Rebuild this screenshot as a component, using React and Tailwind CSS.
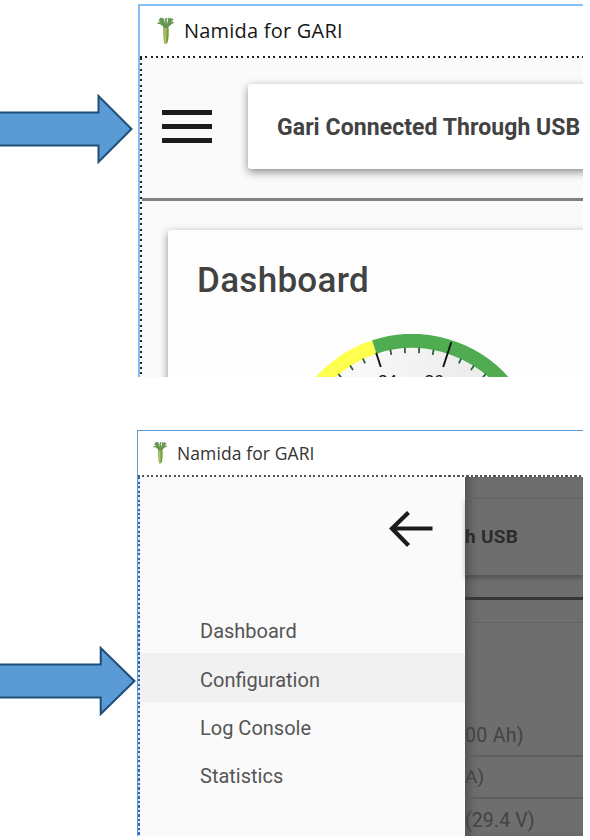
import React from 'react';

const point = (r, deg) => {
  const a = (deg * Math.PI) / 180;
  return [129 + r * Math.sin(a), 129 - r * Math.cos(a)];
};

const arc = (from, to) => {
  const [x1, y1] = point(122, from);
  const [x2, y2] = point(122, to);
  return `M${x1} ${y1}A122 122 0 0 1 ${x2} ${y2}`;
};

function BlockArrow() {
  return (
    <svg className="block h-[70px] w-full" viewBox="0 0 133 70" preserveAspectRatio="none">
      <path
        d="M-4 18.5H98.5V2L131.5 35L98.5 68V51.5H-4Z"
        fill="#5b9bd5"
        stroke="#1f4e79"
        strokeWidth="2"
      />
    </svg>
  );
}

function Daikon({ className }) {
  return (
    <svg className={className} viewBox="0 0 17 28">
      <path d="M6.2 9.5Q8.700 8.500 11.600 9.500Q12 19 10.900 25Q9.400 28 7.400 26.500Q6 22 6.200 9.500Z" fill="#8cae4c" />
      <path d="M8 11Q7.500 20 8.600 26" stroke="#b5c979" strokeWidth="1.200" fill="none" />
      <path d="M10.800 11.500Q11.200 20 10 25" stroke="#6f9440" strokeWidth="1" fill="none" />
      <path
        d="M8 11L5 5L2 3M8 11L6.500 3L5 1M9 11L9 1M10 10L12 3L11 1M10 11L13 5L16 2M7 9L3 6L0.500 6.500M11 9L14 6.500L16.500 5M6 5L3 1M12 5L14 1"
        stroke="#63974f"
        strokeWidth="1.700"
        fill="none"
      />
    </svg>
  );
}

function Gauge() {
  const minor = [-39.6, -32.4, -25.2, -10.8, -3.6, 3.6, 10.8, 25.2, 32.4, 39.6];
  return (
    <svg className="block h-[43px] w-[258px]" viewBox="0 0 258 43">
      <defs>
        <linearGradient id="dial" x1="0" y1="0" x2="1" y2="0.2">
          <stop offset="0.3" stopColor="#f9f9f9" />
          <stop offset="0.7" stopColor="#ededed" />
        </linearGradient>
      </defs>
      <circle cx="129" cy="129" r="116" fill="url(#dial)" />
      <path d={arc(-60, -18)} fill="none" stroke="#ffff50" strokeWidth="14" />
      <path d={arc(-18, 60)} fill="none" stroke="#50ac50" strokeWidth="14" />
      {minor.map((deg) => {
        const [x1, y1] = point(115.5, deg);
        const [x2, y2] = point(110, deg);
        return <line key={deg} x1={x1} y1={y1} x2={x2} y2={y2} stroke="#235a32" strokeWidth="1.700" />;
      })}
      {[-18, 18].map((deg) => {
        const [x1, y1] = point(deg < 0 ? 116 : 127, deg);
        const [x2, y2] = point(101, deg);
        return <line key={deg} x1={x1} y1={y1} x2={x2} y2={y2} stroke="#0c140d" strokeWidth="1.900" />;
      })}
      <g fontFamily="Liberation Sans, Arial, sans-serif" fontSize="17" fill="#111">
        <text x="95" y="53">24</text>
        <text x="141.500" y="53">26</text>
      </g>
    </svg>
  );
}

function MainScreen() {
  return (
    <section className="flex h-[373px] w-[445px] shrink-0 flex-col overflow-hidden border-t-2 border-l-2 border-[#84bef2] bg-white">
      <header className="flex h-[50px] shrink-0 items-center pl-[17px]">
        <Daikon className="h-[28px] w-[17px]" />
        <h1 className="pl-[10px] font-['Open_Sans',sans-serif] text-[20px] leading-[28px] tracking-[0.22px] whitespace-nowrap text-[#161616]">
          Namida for GARI
        </h1>
      </header>
      <div className="h-[2px] shrink-0 bg-[repeating-linear-gradient(90deg,#222_0_2px,transparent_2px_5.330px)]" />
      <div className="flex min-h-0 flex-1 bg-[#fafafa]">
        <div className="w-[2px] shrink-0 bg-[repeating-linear-gradient(180deg,#222_0_2px,transparent_2px_5.330px)]" />
        <div className="flex min-w-0 flex-1 flex-col">
          <div className="flex h-[143px] shrink-0 items-start border-b-[3px] border-[#808080] pt-[26px] pl-[20px]">
            <div className="flex w-[50px] shrink-0 flex-col gap-[9px] pt-[26px]">
              <div className="h-[5px] bg-[#1c1c1c]" />
              <div className="h-[5px] bg-[#1c1c1c]" />
              <div className="h-[5px] bg-[#1c1c1c]" />
            </div>
            <div className="ml-[36px] flex h-[85px] w-[360px] shrink-0 items-center rounded-[3px] bg-white pt-[2px] pl-[29px] shadow-[0_3px_8px_rgba(0,0,0,0.45)]">
              <span className="font-[Roboto,sans-serif] text-[23px] leading-[28px] font-bold tracking-[0.07px] whitespace-nowrap text-[#424242]">
                Gari Connected Through USB
              </span>
            </div>
          </div>
          <div className="flex min-h-0 flex-1 pt-[29px] pl-[26px]">
            <div className="h-[220px] w-[450px] shrink-0 rounded-[3px] bg-[#fefefe] pt-[31px] pl-[29px] shadow-[0_3px_9px_rgba(0,0,0,0.45)]">
              <h2 className="font-[Roboto,sans-serif] text-[35px] leading-[40px] font-medium tracking-[0.3px] text-[#424242]">
                Dashboard
              </h2>
              <div className="pt-[33px] pl-[86px]">
                <Gauge />
              </div>
            </div>
          </div>
        </div>
      </div>
    </section>
  );
}

function MenuItem({ label, active }) {
  return (
    <div className={active ? 'flex h-[49px] items-center bg-[#f1f1f1] pt-[4px] pl-[60px]' : 'flex h-[48px] items-center pt-[4px] pl-[60px]'}>
      <span className="font-[Roboto,sans-serif] text-[20px] leading-[24px] text-[#555]">{label}</span>
    </div>
  );
}

function DrawerScreen() {
  return (
    <section className="flex h-[406px] w-[446px] shrink-0 flex-col overflow-hidden border-t border-l border-[#5b9bd5] bg-white">
      <header className="flex h-[44px] shrink-0 items-center pl-[15px]">
        <Daikon className="h-[24px] w-[14px]" />
        <h1 className="pl-[10px] font-['Open_Sans',sans-serif] text-[17.500px] leading-[24px] tracking-[0.1px] whitespace-nowrap text-[#333]">
          Namida for GARI
        </h1>
      </header>
      <div className="h-[2px] shrink-0 bg-[repeating-linear-gradient(90deg,#555_0_2px,transparent_2px_4.500px)]" />
      <div className="flex min-h-0 flex-1">
        <nav className="flex w-[327px] shrink-0 bg-[#fafafa]">
          <div className="w-[2px] shrink-0 bg-[repeating-linear-gradient(180deg,#3568aa_0_2px,#d3e3f3_2px_4.500px)]" />
          <div className="flex-1">
            <div className="flex h-[128px] justify-end pt-[34px] pr-[32px]">
              <svg className="h-[36px] w-[44px]" viewBox="0 0 44 36" fill="none" stroke="#1c1c1c" strokeWidth="4.200">
                <path d="M43.500 17.500H3M19.500 1.500L3 17.500L19.500 34.500" />
              </svg>
            </div>
            <MenuItem label="Dashboard" />
            <MenuItem label="Configuration" active />
            <MenuItem label="Log Console" />
            <MenuItem label="Statistics" />
          </div>
        </nav>
        <div className="min-w-0 flex-1 bg-[#6e6e6e] pt-[21px] font-[Roboto,sans-serif] whitespace-nowrap shadow-[inset_8px_0_10px_-4px_rgba(0,0,0,0.28)]">
          <div className="flex h-[77px] items-center border-t border-[#636363] shadow-[0_3px_5px_rgba(0,0,0,0.25)]">
            <span className="text-[19px] leading-[24px] font-bold tracking-[0.3px] text-[#2c2c2c]">h USB</span>
          </div>
          <div className="mt-[22px] h-[3px] bg-[#373737]" />
          <div className="mt-[22px] h-px bg-[#626262]" />
          <div className="flex h-[134px] items-end border-b-2 border-[#5f5f5f] pb-[7px]">
            <span className="text-[19.500px] leading-[24px] tracking-[0.3px] text-[#434343]">00 Ah)</span>
          </div>
          <div className="flex h-[42px] items-center border-b-2 border-[#5f5f5f]">
            <span className="text-[19px] leading-[24px] text-[#434343]">A)</span>
          </div>
          <div className="pt-[10px] text-[19.500px] leading-[24px] tracking-[0.1px] text-[#434343]">(29.4 V)</div>
        </div>
      </div>
    </section>
  );
}

export default function App() {
  return (
    <main className="h-[840px] w-[590px] overflow-hidden bg-white">
      <div className="flex items-start pt-[4px]">
        <div className="w-[138px] shrink-0 pt-[90px] pr-[5px]">
          <BlockArrow />
        </div>
        <MainScreen />
      </div>
      <div className="flex items-start pt-[53px]">
        <div className="w-[137px] shrink-0 pt-[216px] pr-px">
          <BlockArrow />
        </div>
        <DrawerScreen />
      </div>
    </main>
  );
}
